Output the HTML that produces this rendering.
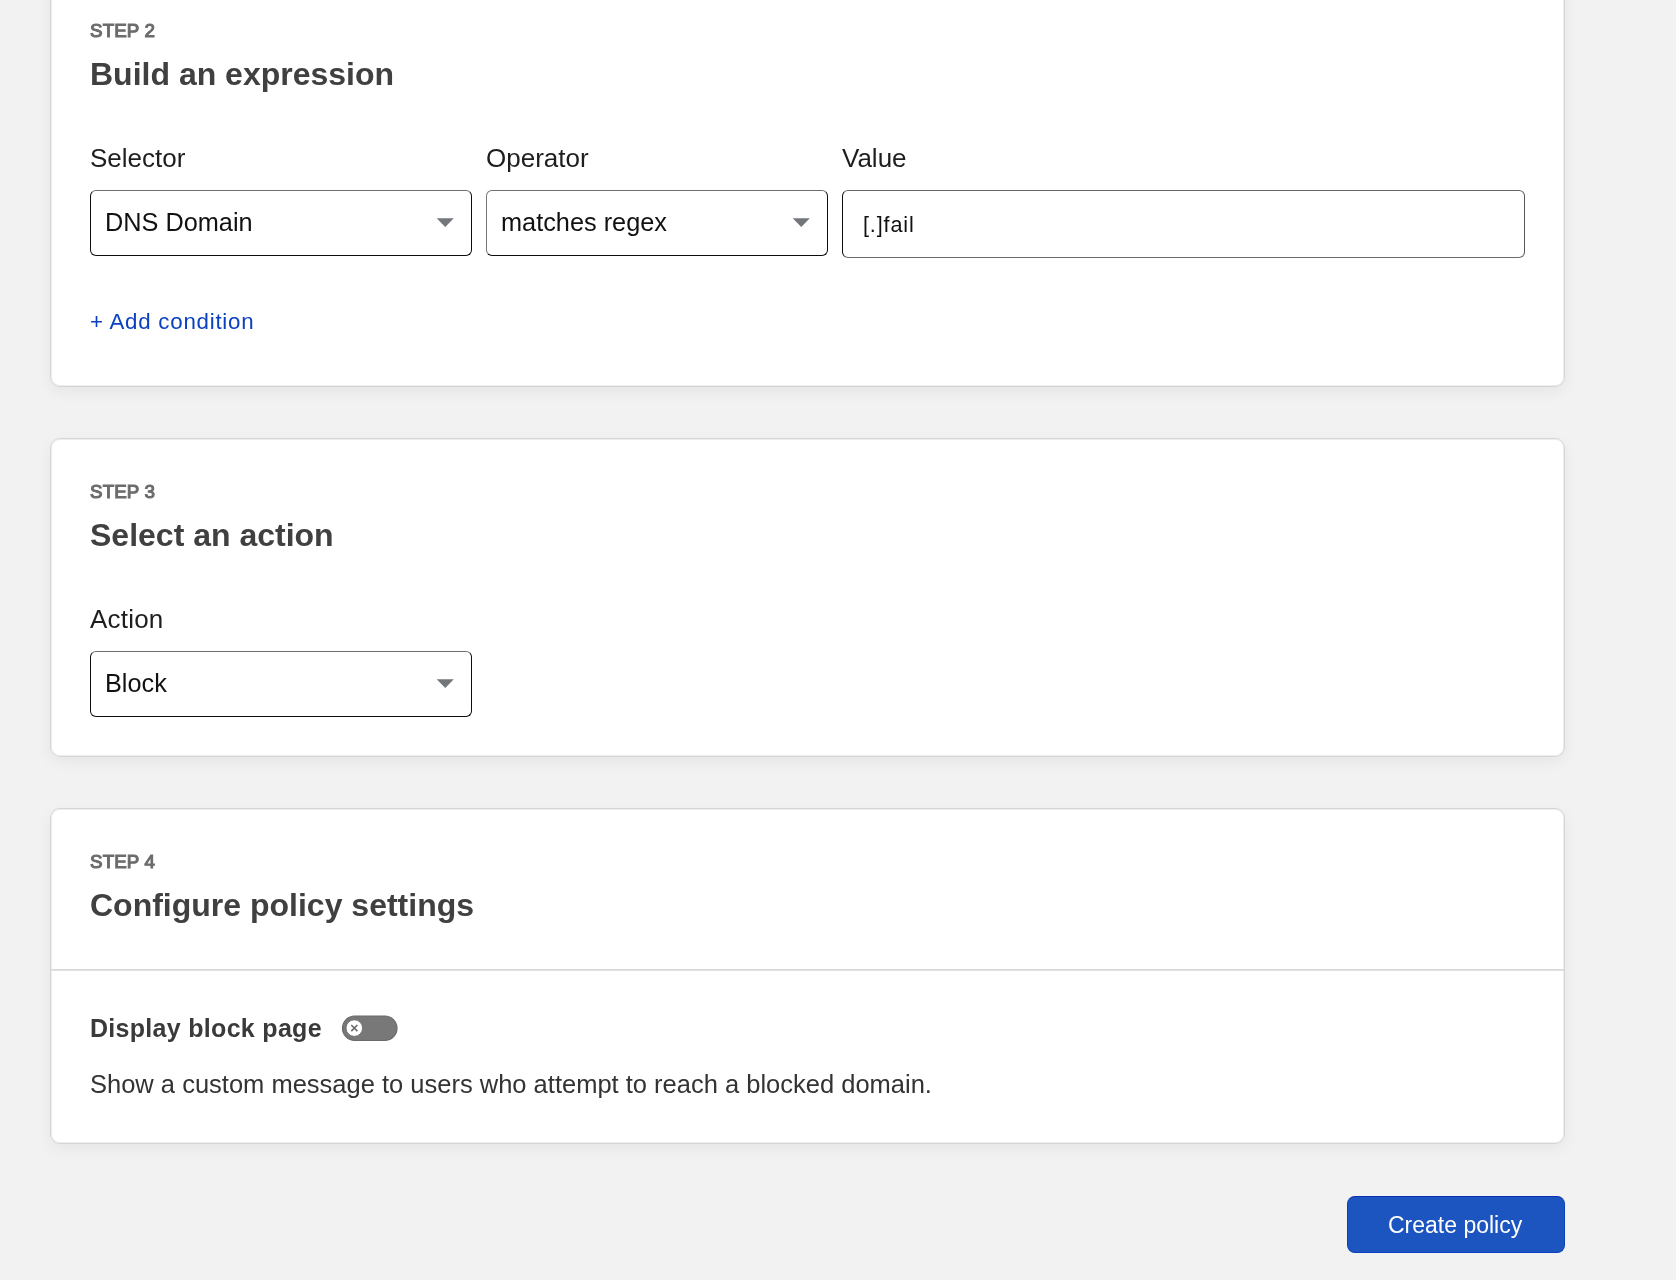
<!DOCTYPE html>
<html>
<head>
<meta charset="utf-8">
<style>
html,body{margin:0;padding:0;}
body{width:1676px;height:1280px;background:#f2f2f2;position:relative;overflow:hidden;font-family:"Liberation Sans",sans-serif;}
.card{position:absolute;left:50px;width:1513px;background:#fff;border:1px solid #d5d5d5;border-radius:10px;box-shadow:inset 0 0 0 1px #eeeeee,0 5px 16px rgba(0,0,0,0.055);}
.abs{position:absolute;white-space:nowrap;}
.step{font-weight:normal;font-size:18.8px;letter-spacing:0.1px;color:#6c6c6c;-webkit-text-stroke:1.1px #6c6c6c;}
.h{font-weight:bold;font-size:32px;color:#404040;}
.lbl{font-size:26px;color:#1e1e1e;}
.sel{position:absolute;box-sizing:border-box;border:1px solid #0d0d0d;border-top-color:#6e6e6e;border-radius:6px;background:#fff;}
.sel .t{position:absolute;font-size:25.3px;color:#111;white-space:nowrap;}
</style>
</head>
<body>
<div style="position:absolute;left:0;top:0;width:1676px;height:1280px;will-change:transform;">
<!-- card 1 -->
<div class="card" style="top:-23px;height:408px;"></div>
<div class="abs step" style="left:90px;top:20px;">STEP 2</div>
<div class="abs h" style="left:90px;top:56px;">Build an expression</div>
<div class="abs lbl" style="left:90px;top:143px;">Selector</div>
<div class="abs lbl" style="left:486px;top:143px;">Operator</div>
<div class="abs lbl" style="left:842px;top:143px;">Value</div>
<div class="sel" style="left:90px;top:190px;width:382px;height:66px;"><div class="t" style="left:14px;top:17px;">DNS Domain</div><svg style="position:absolute;left:345px;top:27px;" width="20" height="12"><polygon points="0.7,0.3 17.8,0.3 9.25,9.1" fill="#72767b"/></svg></div>
<div class="sel" style="left:486px;top:190px;width:342px;height:66px;border-left-color:#777;"><div class="t" style="left:14px;top:17px;">matches regex</div><svg style="position:absolute;left:305px;top:27px;" width="20" height="12"><polygon points="0.7,0.3 17.8,0.3 9.25,9.1" fill="#72767b"/></svg></div>
<div class="sel" style="left:842px;top:190px;width:683px;height:68px;border-bottom-color:#6a6a6a;border-right-color:#555;border-top-color:#666;"><div class="t" style="left:20px;top:21px;font-size:21.6px;letter-spacing:0.85px;">[.]fail</div></div>
<div class="abs" style="left:90px;top:309px;font-size:22.3px;letter-spacing:0.75px;color:#0b40c0;">+ Add condition</div>

<!-- card 2 -->
<div class="card" style="top:438px;height:317px;"></div>
<div class="abs step" style="left:90px;top:481px;">STEP 3</div>
<div class="abs h" style="left:90px;top:517px;">Select an action</div>
<div class="abs lbl" style="left:90px;top:604px;letter-spacing:0.2px;">Action</div>
<div class="sel" style="left:90px;top:651px;width:382px;height:66px;"><div class="t" style="left:14px;top:17px;">Block</div><svg style="position:absolute;left:345px;top:27px;" width="20" height="12"><polygon points="0.7,0.3 17.8,0.3 9.25,9.1" fill="#72767b"/></svg></div>

<!-- card 3 -->
<div class="card" style="top:808px;height:334px;"></div>
<div class="abs step" style="left:90px;top:851px;">STEP 4</div>
<div class="abs h" style="left:90px;top:887px;">Configure policy settings</div>
<div class="abs" style="left:51px;top:969px;width:1513px;height:2px;background:linear-gradient(#d8d8d8 50%,#e2e2e2 50%);"></div>
<div class="abs" style="left:90px;top:1014px;font-size:25px;letter-spacing:0.3px;font-weight:bold;color:#3a3a3a;">Display block page</div>
<svg class="abs" style="left:341px;top:1014px;" width="58" height="28" viewBox="0 0 58 28"><rect x="1.5" y="2" width="54.5" height="24.5" rx="12.25" fill="#787878" stroke="#6a6a6a" stroke-width="1.2"/><circle cx="13.3" cy="14.1" r="8.3" fill="#fff" stroke="#6c6c6c" stroke-width="0.9"/><path d="M10.3 11 L16.4 17.1 M16.4 11 L10.3 17.1" stroke="#676767" stroke-width="1.5" fill="none"/></svg>
<div class="abs" style="left:90px;top:1070px;font-size:25.5px;color:#333;">Show a custom message to users who attempt to reach a blocked domain.</div>

<!-- button -->
<div class="abs" style="left:1347px;top:1196px;width:218px;height:57px;box-sizing:border-box;border:1px solid #0b40bf;border-top-color:#0a2fb3;border-radius:8px;background:#1c55bf;"></div>
<div class="abs" style="left:1388px;top:1212px;font-size:23px;color:#fff;">Create policy</div>
</div>
</body>
</html>
